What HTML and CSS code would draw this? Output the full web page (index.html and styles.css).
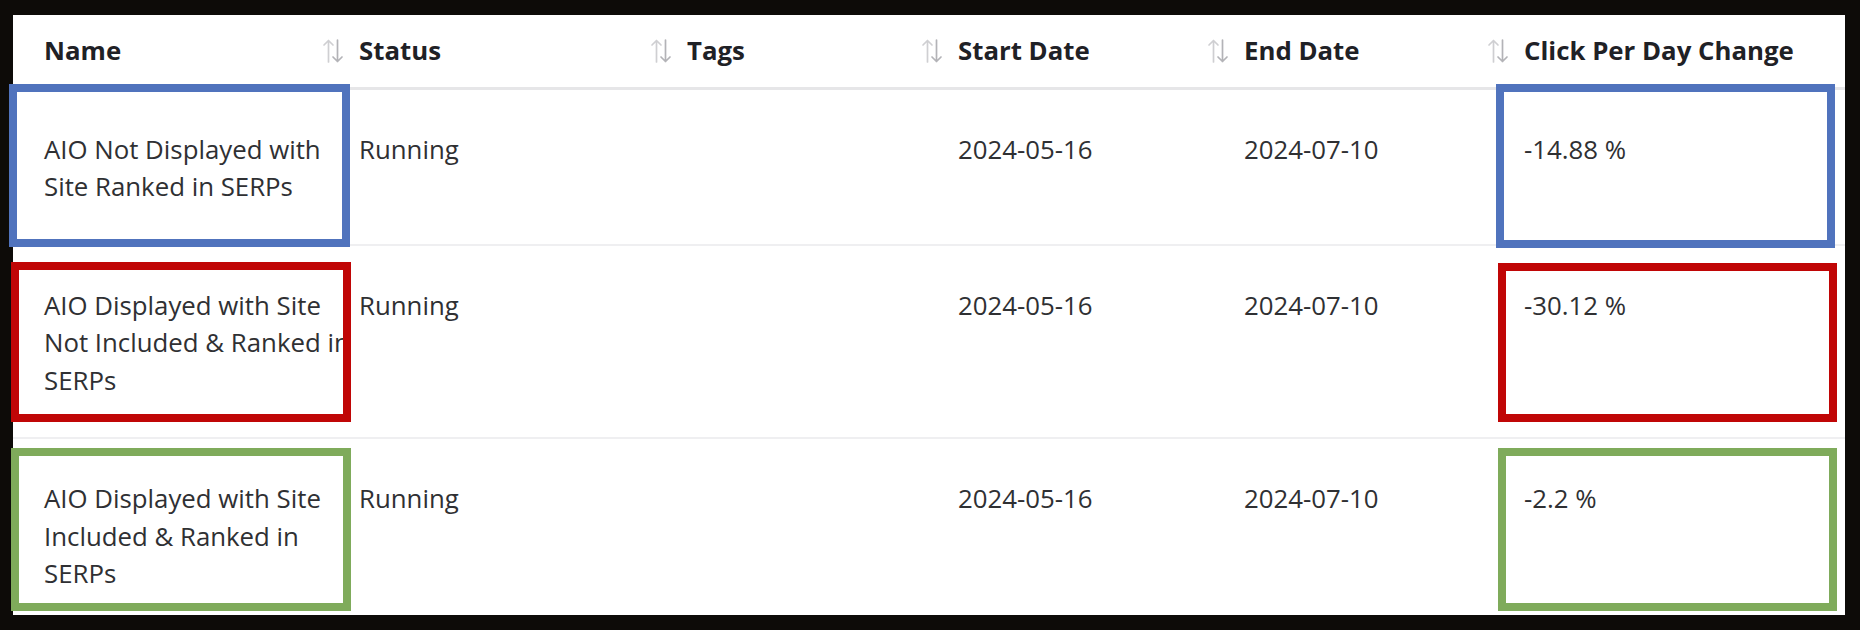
FILE: index.html
```html
<!DOCTYPE html>
<html lang="en">
<head>
<meta charset="utf-8">
<title>Experiments</title>
<link rel="stylesheet" href="styles.css">
</head>
<body>
<div class="stage">
  <div class="panel">
    <table class="grid">
      <colgroup>
        <col class="c-name"><col class="c-status"><col class="c-tags"><col class="c-start"><col class="c-end"><col class="c-change">
      </colgroup>
      <thead>
        <tr>
          <th class="first"><div class="th-in"><span>Name</span><svg class="sort" viewBox="0 0 24 24"><path d="M7.5 23V1.5M3 6 7.5 1.5 12 6" class="up"/><path d="M16.5 1v21.5M12 18l4.5 4.5L21 18" class="down"/></svg></div></th>
          <th><div class="th-in"><span>Status</span><svg class="sort" viewBox="0 0 24 24"><path d="M7.5 23V1.5M3 6 7.5 1.5 12 6" class="up"/><path d="M16.5 1v21.5M12 18l4.5 4.5L21 18" class="down"/></svg></div></th>
          <th><div class="th-in"><span>Tags</span><svg class="sort" viewBox="0 0 24 24"><path d="M7.5 23V1.5M3 6 7.5 1.5 12 6" class="up"/><path d="M16.5 1v21.5M12 18l4.5 4.5L21 18" class="down"/></svg></div></th>
          <th><div class="th-in"><span>Start Date</span><svg class="sort" viewBox="0 0 24 24"><path d="M7.5 23V1.5M3 6 7.5 1.5 12 6" class="up"/><path d="M16.5 1v21.5M12 18l4.5 4.5L21 18" class="down"/></svg></div></th>
          <th><div class="th-in"><span>End Date</span><svg class="sort" viewBox="0 0 24 24"><path d="M7.5 23V1.5M3 6 7.5 1.5 12 6" class="up"/><path d="M16.5 1v21.5M12 18l4.5 4.5L21 18" class="down"/></svg></div></th>
          <th><div class="th-in"><span>Click Per Day Change</span></div></th>
        </tr>
      </thead>
      <tbody>
        <tr>
          <td class="first">AIO Not Displayed with Site Ranked in SERPs</td>
          <td>Running</td>
          <td></td>
          <td>2024-05-16</td>
          <td>2024-07-10</td>
          <td>-14.88 %</td>
        </tr>
        <tr>
          <td class="first">AIO Displayed with Site Not Included &amp; Ranked in SERPs</td>
          <td>Running</td>
          <td></td>
          <td>2024-05-16</td>
          <td>2024-07-10</td>
          <td>-30.12 %</td>
        </tr>
        <tr>
          <td class="first">AIO Displayed with Site Included &amp; Ranked in SERPs</td>
          <td>Running</td>
          <td></td>
          <td>2024-05-16</td>
          <td>2024-07-10</td>
          <td>-2.2 %</td>
        </tr>
      </tbody>
    </table>
  </div>
  <div class="mark blue mark-l1"></div>
  <div class="mark red mark-l2"></div>
  <div class="mark green mark-l3"></div>
  <div class="mark blue mark-r1"></div>
  <div class="mark red mark-r2"></div>
  <div class="mark green mark-r3"></div>
</div>
</body>
</html>
```
FILE: styles.css
```css
* { box-sizing: border-box; }
html, body {
  margin: 0;
  padding: 0;
  background: #0d0b08;
  width: 1860px;
  height: 630px;
  overflow: hidden;
}
body {
  padding: 15px 15px 0 13px;
  font-family: "Open Sans", "Noto Sans", sans-serif;
}
.stage {
  position: relative;
  width: 1832px;
  height: 600px;
}
.panel {
  width: 1832px;
  height: 600px;
  background: #ffffff;
  overflow: hidden;
}
.grid {
  width: 1832px;
  border-collapse: collapse;
  table-layout: fixed;
  font-size: 25.8px;
  line-height: 37.5px;
}
.c-name { width: 344px; }
.c-status { width: 328px; }
.c-tags { width: 271px; }
.c-start { width: 286px; }
.c-end { width: 280px; }
.c-change { width: 323px; }

.grid th {
  height: 73px;
  padding: 0 0 0 2px;
  text-align: left;
  font-weight: 700;
  color: #1f2126;
  vertical-align: middle;
  border-bottom: 3px solid #e6e6e8;
}
.grid th.first { padding-left: 31px; }
.th-in {
  display: flex;
  align-items: center;
  justify-content: space-between;
  padding-right: 12px;
  white-space: nowrap;
}
.sort {
  width: 24px;
  height: 24px;
  flex: none;
}
.sort path {
  fill: none;
  stroke-width: 1.7;
  stroke-linecap: round;
  stroke-linejoin: round;
}
.sort .up { stroke: #cfcfd2; }
.sort .down { stroke: #b3b3b7; }

.grid td {
  padding: 41px 0 38px 2px;
  vertical-align: top;
  color: #2f3033;
  font-weight: 400;
  border-bottom: 2px solid #efeff1;
}
.grid td.first { padding-left: 31px; }

.mark {
  position: absolute;
  border: 8px solid;
  background: transparent;
  pointer-events: none;
}
.blue { border-color: #5073bd; }
.red { border-color: #c00606; }
.green { border-color: #7fab5b; }

.mark-l1 { left: -4px; top: 69px; width: 341px; height: 163px; }
.mark-l2 { left: -2px; top: 247px; width: 340px; height: 160px; }
.mark-l3 { left: -2px; top: 433px; width: 340px; height: 163px; }
.mark-r1 { left: 1483px; top: 69px; width: 339px; height: 164px; }
.mark-r2 { left: 1485px; top: 248px; width: 339px; height: 159px; }
.mark-r3 { left: 1485px; top: 433px; width: 339px; height: 163px; }
```
